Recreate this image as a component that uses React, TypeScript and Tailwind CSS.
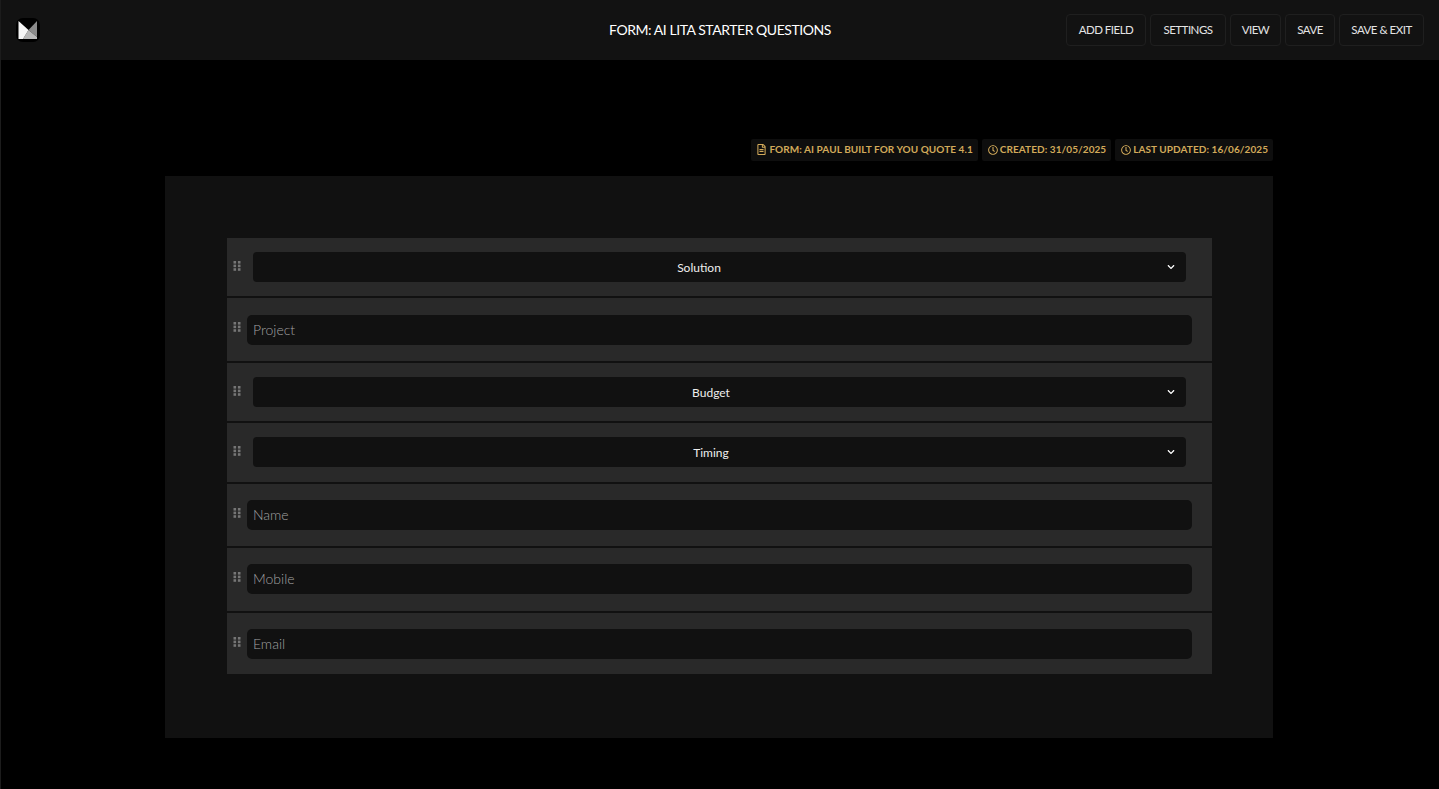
import type { ReactNode } from "react";
import { FaChevronDown, FaRegClock, FaRegFileAlt } from "react-icons/fa";

const font = { fontFamily: '"Lato", "Noto Sans", sans-serif' };

function Grip({ mt }: { mt: string }) {
  return (
    <svg width="8" height="10" viewBox="0 0 8 10" className={`shrink-0 text-[#767676] ${mt}`} fill="currentColor">
      <rect x="0.5" y="0" width="2.6" height="2.6" />
      <rect x="4.9" y="0" width="2.6" height="2.6" />
      <rect x="0.5" y="3.6" width="2.6" height="2.6" />
      <rect x="4.9" y="3.6" width="2.6" height="2.6" />
      <rect x="0.5" y="7.2" width="2.6" height="2.6" />
      <rect x="4.9" y="7.2" width="2.6" height="2.6" />
    </svg>
  );
}

function SelectRow({ label, pr, h }: { label: string; pr: string; h: string }) {
  return (
    <div className={`flex items-start bg-[#292929] pl-[6px] pr-[26px] ${h}`}>
      <Grip mt="mt-[23px]" />
      <div className="relative ml-[12px] mt-[14px] flex h-[30px] flex-1 items-center rounded-[4px] bg-[#111111]">
        <span className={`flex-1 pt-[1px] text-center text-[12px] text-[#eeeeee] ${pr}`}>{label}</span>
        <FaChevronDown className="absolute right-[11px] top-[11px] text-white" size={8} />
      </div>
    </div>
  );
}

function InputRow({ label, h, mt }: { label: string; h: string; mt: string }) {
  return (
    <div className={`flex items-start bg-[#292929] pl-[6px] pr-[20px] ${h}`}>
      <Grip mt="mt-[24px]" />
      <div className={`ml-[6px] flex h-[30px] flex-1 items-center rounded-[5px] bg-[#111111] px-[6px] pb-[1px] text-[14px] font-light text-[#a2a2a2] ${mt}`}>
        {label}
      </div>
    </div>
  );
}

function HeaderButton({ label, w }: { label: string; w: string }) {
  return (
    <button className={`h-[32px] rounded-[4px] border border-[#1f1f1f] bg-[#121212] text-center text-[11.5px] tracking-[-0.5px] text-[#e4e4e4] ${w}`}>
      {label}
    </button>
  );
}

function Meta({ icon, label, pl }: { icon: ReactNode; label: string; pl: string }) {
  return (
    <div className={`flex h-[22px] items-center gap-[2px] rounded-[2px] bg-[#0e0e0e] pb-[1px] pr-[5px] text-[10px] font-bold tracking-[0.07px] text-[#d2aa5a] ${pl}`}>
      {icon}
      <span>{label}</span>
    </div>
  );
}

export default function App() {
  return (
    <div className="min-h-[789px] border-l border-[#1c1c1c] bg-black" style={font}>
      <header className="relative flex h-[60px] items-center justify-between bg-[#121212] pl-[15px] pr-[15px]">
        <svg width="24" height="24" viewBox="0 0 24 24">
          <rect width="24" height="24" fill="#000" rx="7" />
          <polygon points="12.5,12 21,3 21,19" fill="#8a8a8a" />
          <polygon points="12.5,12 21,19 21,21 7,21" fill="#b8b8b8" />
          <polygon points="2.5,3 12.5,12 7,21 2.5,21" fill="#f6f6f6" />
        </svg>
        <h1 className="pointer-events-none absolute left-0 right-0 pb-[1px] text-center text-[14px] tracking-[-0.45px] text-white">
          FORM: AI LITA STARTER QUESTIONS
        </h1>
        <div className="flex gap-[4px]">
          <HeaderButton label="ADD FIELD" w="w-[80px]" />
          <HeaderButton label="SETTINGS" w="w-[76px]" />
          <HeaderButton label="VIEW" w="w-[51px]" />
          <HeaderButton label="SAVE" w="w-[50px]" />
          <HeaderButton label="SAVE & EXIT" w="w-[85px]" />
        </div>
      </header>

      <main className="ml-[164px] w-[1108px] pt-[79px]">
        <div className="flex justify-end gap-[4px]">
          <Meta pl="pl-[5px]" icon={<FaRegFileAlt size={11} />} label="FORM: AI PAUL BUILT FOR YOU QUOTE 4.1" />
          <Meta pl="pl-[6px]" icon={<FaRegClock size={10} />} label="CREATED: 31/05/2025" />
          <Meta pl="pl-[6px]" icon={<FaRegClock size={10} />} label="LAST UPDATED: 16/06/2025" />
        </div>
        <section className="mt-[15px] h-[562px] bg-[#111111] pl-[62px] pr-[61px] pt-[62px]">
          <div className="flex flex-col gap-[2px]">
            <SelectRow label="Solution" pr="pr-[41px]" h="h-[58px]" />
            <InputRow label="Project" h="h-[63px]" mt="mt-[17px]" />
            <SelectRow label="Budget" pr="pr-[17px]" h="h-[58px]" />
            <SelectRow label="Timing" pr="pr-[17px]" h="h-[59px]" />
            <InputRow label="Name" h="h-[62px]" mt="mt-[16px]" />
            <InputRow label="Mobile" h="h-[63px]" mt="mt-[16px]" />
            <InputRow label="Email" h="h-[61px]" mt="mt-[16px]" />
          </div>
        </section>
      </main>
    </div>
  );
}
